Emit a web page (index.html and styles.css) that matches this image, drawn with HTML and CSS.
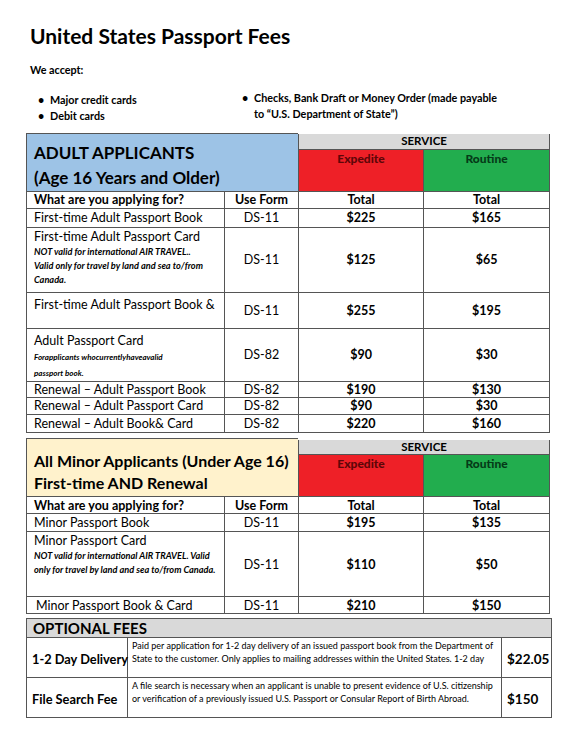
FILE: index.html
```html
<!DOCTYPE html>
<html lang="en">
<head>
    <meta charset="UTF-8">
    <meta name="viewport" content="width=device-width, initial-scale=1.0">
    <title>United States Passport Fees</title>
    <link rel="stylesheet" href="styles.css">
</head>
<body>
    <div class="page">
        <h1>United States Passport Fees</h1>
        <p class="accept">We accept:</p>

        <div class="methods">
            <ul class="methods-left">
                <li>Major credit cards</li>
                <li>Debit cards</li>
            </ul>
            <ul class="methods-right">
                <li>Checks, Bank Draft or Money Order (made payable<br>to “U.S. Department of State”)</li>
            </ul>
        </div>

        <!-- adult applicants -->
        <table class="fees">
            <colgroup>
                <col class="c-what">
                <col class="c-form">
                <col class="c-exp">
                <col class="c-rout">
            </colgroup>
            <tr class="r-service">
                <td class="group adult" rowspan="2" colspan="2">ADULT APPLICANTS<br>(Age 16 Years and Older)</td>
                <td class="service" colspan="2">SERVICE</td>
            </tr>
            <tr class="r-speed">
                <td class="expedite">Expedite</td>
                <td class="routine">Routine</td>
            </tr>
            <tr class="r-head">
                <td class="head-left">What are you applying for?</td>
                <td class="mid bold">Use Form</td>
                <td class="mid bold">Total</td>
                <td class="mid bold">Total</td>
            </tr>
            <tr style="height:19px">
                <td>First-time Adult Passport Book</td>
                <td class="mid">DS-11</td>
                <td class="mid bold">$225</td>
                <td class="mid bold">$165</td>
            </tr>
            <tr style="height:65px">
                <td class="top">First-time Adult Passport Card
                    <span class="note">NOT valid for international AIR TRAVEL..<br>Valid only for travel by land and sea to/from<br>Canada.</span>
                </td>
                <td class="mid">DS-11</td>
                <td class="mid bold">$125</td>
                <td class="mid bold">$65</td>
            </tr>
            <tr style="height:36px">
                <td class="top pad-top">First-time Adult Passport Book &amp;</td>
                <td class="mid">DS-11</td>
                <td class="mid bold">$255</td>
                <td class="mid bold">$195</td>
            </tr>
            <tr style="height:53px">
                <td class="top pad-top">Adult Passport Card
                    <span class="note small">Forapplicants whocurrentlyhaveavalid<br>passport book.</span>
                </td>
                <td class="mid">DS-82</td>
                <td class="mid bold">$90</td>
                <td class="mid bold">$30</td>
            </tr>
            <tr style="height:16px">
                <td>Renewal – Adult Passport Book</td>
                <td class="mid">DS-82</td>
                <td class="mid bold">$190</td>
                <td class="mid bold">$130</td>
            </tr>
            <tr style="height:17px">
                <td>Renewal – Adult Passport Card</td>
                <td class="mid">DS-82</td>
                <td class="mid bold">$90</td>
                <td class="mid bold">$30</td>
            </tr>
            <tr style="height:18px">
                <td>Renewal – Adult Book&amp; Card</td>
                <td class="mid">DS-82</td>
                <td class="mid bold">$220</td>
                <td class="mid bold">$160</td>
            </tr>
        </table>

        <!-- minor applicants -->
        <table class="fees minor-table">
            <colgroup>
                <col class="c-what">
                <col class="c-form">
                <col class="c-exp">
                <col class="c-rout">
            </colgroup>
            <tr class="r-service">
                <td class="group minor" rowspan="2" colspan="2">All Minor Applicants (Under Age 16)<br>First-time AND Renewal</td>
                <td class="service" colspan="2">SERVICE</td>
            </tr>
            <tr class="r-speed">
                <td class="expedite">Expedite</td>
                <td class="routine">Routine</td>
            </tr>
            <tr class="r-head">
                <td class="head-left">What are you applying for?</td>
                <td class="mid bold">Use Form</td>
                <td class="mid bold">Total</td>
                <td class="mid bold">Total</td>
            </tr>
            <tr style="height:18px">
                <td>Minor Passport Book</td>
                <td class="mid">DS-11</td>
                <td class="mid bold">$195</td>
                <td class="mid bold">$135</td>
            </tr>
            <tr style="height:65px">
                <td class="top">Minor Passport Card
                    <span class="note">NOT valid for international AIR TRAVEL. Valid<br>only for travel by land and sea to/from Canada.</span>
                </td>
                <td class="mid">DS-11</td>
                <td class="mid bold">$110</td>
                <td class="mid bold">$50</td>
            </tr>
            <tr style="height:17px">
                <td class="indent">Minor Passport Book &amp; Card</td>
                <td class="mid">DS-11</td>
                <td class="mid bold">$210</td>
                <td class="mid bold">$150</td>
            </tr>
        </table>

        <!-- optional fees -->
        <table class="optional">
            <colgroup>
                <col class="o-name">
                <col class="o-desc">
                <col class="o-price">
            </colgroup>
            <tr class="o-head">
                <td colspan="3">OPTIONAL FEES</td>
            </tr>
            <tr class="o-row">
                <td class="o-title">1-2 Day Delivery</td>
                <td class="o-text">Paid per application for 1-2 day delivery of an issued passport book from the Department of<br>State to the customer. Only applies to mailing addresses within the United States. 1-2 day</td>
                <td class="o-cost">$22.05</td>
            </tr>
            <tr class="o-row">
                <td class="o-title">File Search Fee</td>
                <td class="o-text">A file search is necessary when an applicant is unable to present evidence of U.S. citizenship<br>or verification of a previously issued U.S. Passport or Consular Report of Birth Abroad.</td>
                <td class="o-cost">$150</td>
            </tr>
        </table>
    </div>
</body>
</html>
```

FILE: styles.css
```css
body {
    margin: 0;
    padding: 0;
    background: #fff;
    color: #000;
    font-family: Lato, "Open Sans", sans-serif;
}
.page {
    width: 525px;
    padding: 22px 16px 0 26px;
}
h1 {
    margin: 0 0 0 4px;
    font-size: 21px;
    line-height: 28px;
    font-weight: bold;
}
.accept {
    margin: 13px 0 0 4px;
    font-size: 10.8px;
    font-weight: bold;
    line-height: 14px;
}
.methods {
    display: flex;
    margin-top: 13px;
    font-size: 10.8px;
    font-weight: bold;
    line-height: 16px;
}
.methods ul {
    list-style: none;
    margin: 0;
    padding: 0;
}
.methods li {
    display: flex;
    white-space: nowrap;
}
.methods li::before {
    content: "•";
    width: 12px;
    flex-shrink: 0;
}
.methods-left {
    width: 204px;
    padding-left: 12px !important;
    margin-top: 2px !important;
}
.methods-right {
    width: 300px;
}

/* fee tables */
.fees {
    width: 523px;
    margin-top: 8px;
    border-collapse: collapse;
    table-layout: fixed;
    border: 1px solid #777;
}
.minor-table {
    margin-top: 5px;
}
.c-what { width: 198px; }
.c-form { width: 74px; }
.c-exp { width: 125px; }
.c-rout { width: 126px; }
.fees td {
    border: 1px solid #555;
    padding: 0 0 0 7px;
    font-size: 12.5px;
    line-height: 15px;
    vertical-align: middle;
    white-space: nowrap;
}
.fees td.mid {
    text-align: center;
    padding: 0;
}
.fees td.top {
    vertical-align: top;
    padding-top: 1px;
}
.fees td.pad-top {
    padding-top: 4px;
}
.fees td.indent {
    padding-left: 9px;
}
.bold {
    font-weight: bold;
}
.note {
    display: block;
    margin-top: 1px;
    font-size: 9.2px;
    line-height: 14px;
    font-style: italic;
    font-weight: bold;
}
.note.small {
    font-size: 8px;
    line-height: 16px;
}
.r-service {
    height: 16px;
}
.r-speed {
    height: 42px;
}
.r-head {
    height: 17px;
}
.fees td.head-left {
    font-weight: bold;
}
.fees td.group {
    vertical-align: bottom;
    font-weight: bold;
    padding: 0 0 1px 7px;
}
.fees td.adult {
    background: #9dc3e6;
    font-size: 17px;
    line-height: 25px;
}
.fees td.minor {
    background: #fff2cc;
    font-size: 16px;
    line-height: 22px;
    padding-bottom: 2px;
}
.fees td.service {
    background: #d9d9d9;
    text-align: center;
    font-weight: bold;
    font-size: 11.5px;
    line-height: 14px;
    padding: 0;
    border-top: 2px solid #fff;
}
.fees td.expedite,
.fees td.routine {
    vertical-align: top;
    text-align: center;
    font-weight: 900;
    font-size: 12px;
    line-height: 15px;
    padding: 1px 0 0;
}
.fees td.expedite {
    background: #ee2027;
    color: #5e0608;
}
.fees td.routine {
    background: #22ad4e;
    color: #053a18;
}

/* optional fees */
.optional {
    width: 525px;
    margin-top: 4px;
    border-collapse: collapse;
    table-layout: fixed;
    border: 1px solid #777;
}
.o-name { width: 101px; }
.o-desc { width: 374px; }
.o-price { width: 50px; }
.optional td {
    border: 1px solid #555;
    white-space: nowrap;
}
.o-head td {
    height: 18px;
    background: #d9d9d9;
    font-size: 15px;
    font-weight: bold;
    line-height: 18px;
    padding: 0 0 0 6px;
}
.o-row {
    height: 40px;
}
.o-title {
    font-size: 12.8px;
    font-weight: bold;
    padding: 2px 0 0 5px;
}
.o-text {
    vertical-align: top;
    font-size: 9px;
    line-height: 13px;
    padding: 1px 0 0 4px;
}
.o-cost {
    font-size: 13.5px;
    font-weight: bold;
    padding: 2px 0 0 5px;
}
```
